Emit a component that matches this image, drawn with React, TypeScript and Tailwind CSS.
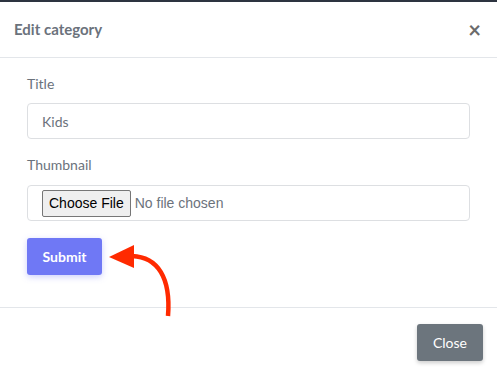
export default function App() {
  return (
    <div className='relative w-[497px] h-[378px] bg-white overflow-hidden font-["Lato",sans-serif]'>
      <div className='h-[2px] bg-[#2d3440]' />

      {/* header */}
      <div className='flex items-center justify-between h-[56px] pl-[14px] pr-[16px] border-b border-[#e3e6ea]'>
        <h5 className='text-[15px] font-bold text-[#6b727c]'>Edit category</h5>
        <button className='text-[22px] leading-none font-bold text-[#6b6b6b]'>×</button>
      </div>

      {/* body */}
      <div className='px-[27px] pt-[15px] pb-[32px] border-b border-[#e3e6ea]'>
        <label className='block text-[14px] text-[#6b727c] mb-[9px]'>Title</label>
        <div className='h-[36px] flex items-center px-[14px] border border-[#dddfe2] rounded-[4px] text-[14px] text-[#6b727c]'>
          Kids
        </div>

        <label className='block text-[14px] text-[#6b727c] mt-[15px] mb-[10px]'>Thumbnail</label>
        <div className='h-[36px] flex items-center gap-[4px] px-[14px] border border-[#dddfe2] rounded-[4px] font-["Liberation_Sans",sans-serif]'>
          <span className='h-[27px] px-[6px] flex items-center border border-[#767676] bg-[#efefef] rounded-[2px] text-[14px] text-black'>
            Choose File
          </span>
          <span className='text-[14px] text-[#6c737c]'>No file chosen</span>
        </div>

        <button className='mt-[17px] h-[37px] w-[75px] rounded-[3px] bg-[#6f78f5] text-white text-[14px] font-bold shadow-[0_2px_6px_rgba(111,120,245,0.35)]'>
          Submit
        </button>
      </div>

      {/* footer */}
      <div className='flex justify-end pt-[16px] pr-[14px]'>
        <button className='h-[37px] w-[66px] rounded-[3px] bg-[#6c757d] text-white text-[14px] shadow-[0_2px_4px_rgba(0,0,0,0.2)]'>
          Close
        </button>
      </div>

      {/* annotation arrow */}
      <svg className='absolute left-0 top-0 pointer-events-none' width='497' height='378'>
        <path d='M132 256 C 158 257, 171 278, 168 316' fill='none' stroke='#ff2a00' strokeWidth='4.5' />
        <polygon points='109,257 134,245 134,268' fill='#ff2a00' />
      </svg>
    </div>
  )
}
